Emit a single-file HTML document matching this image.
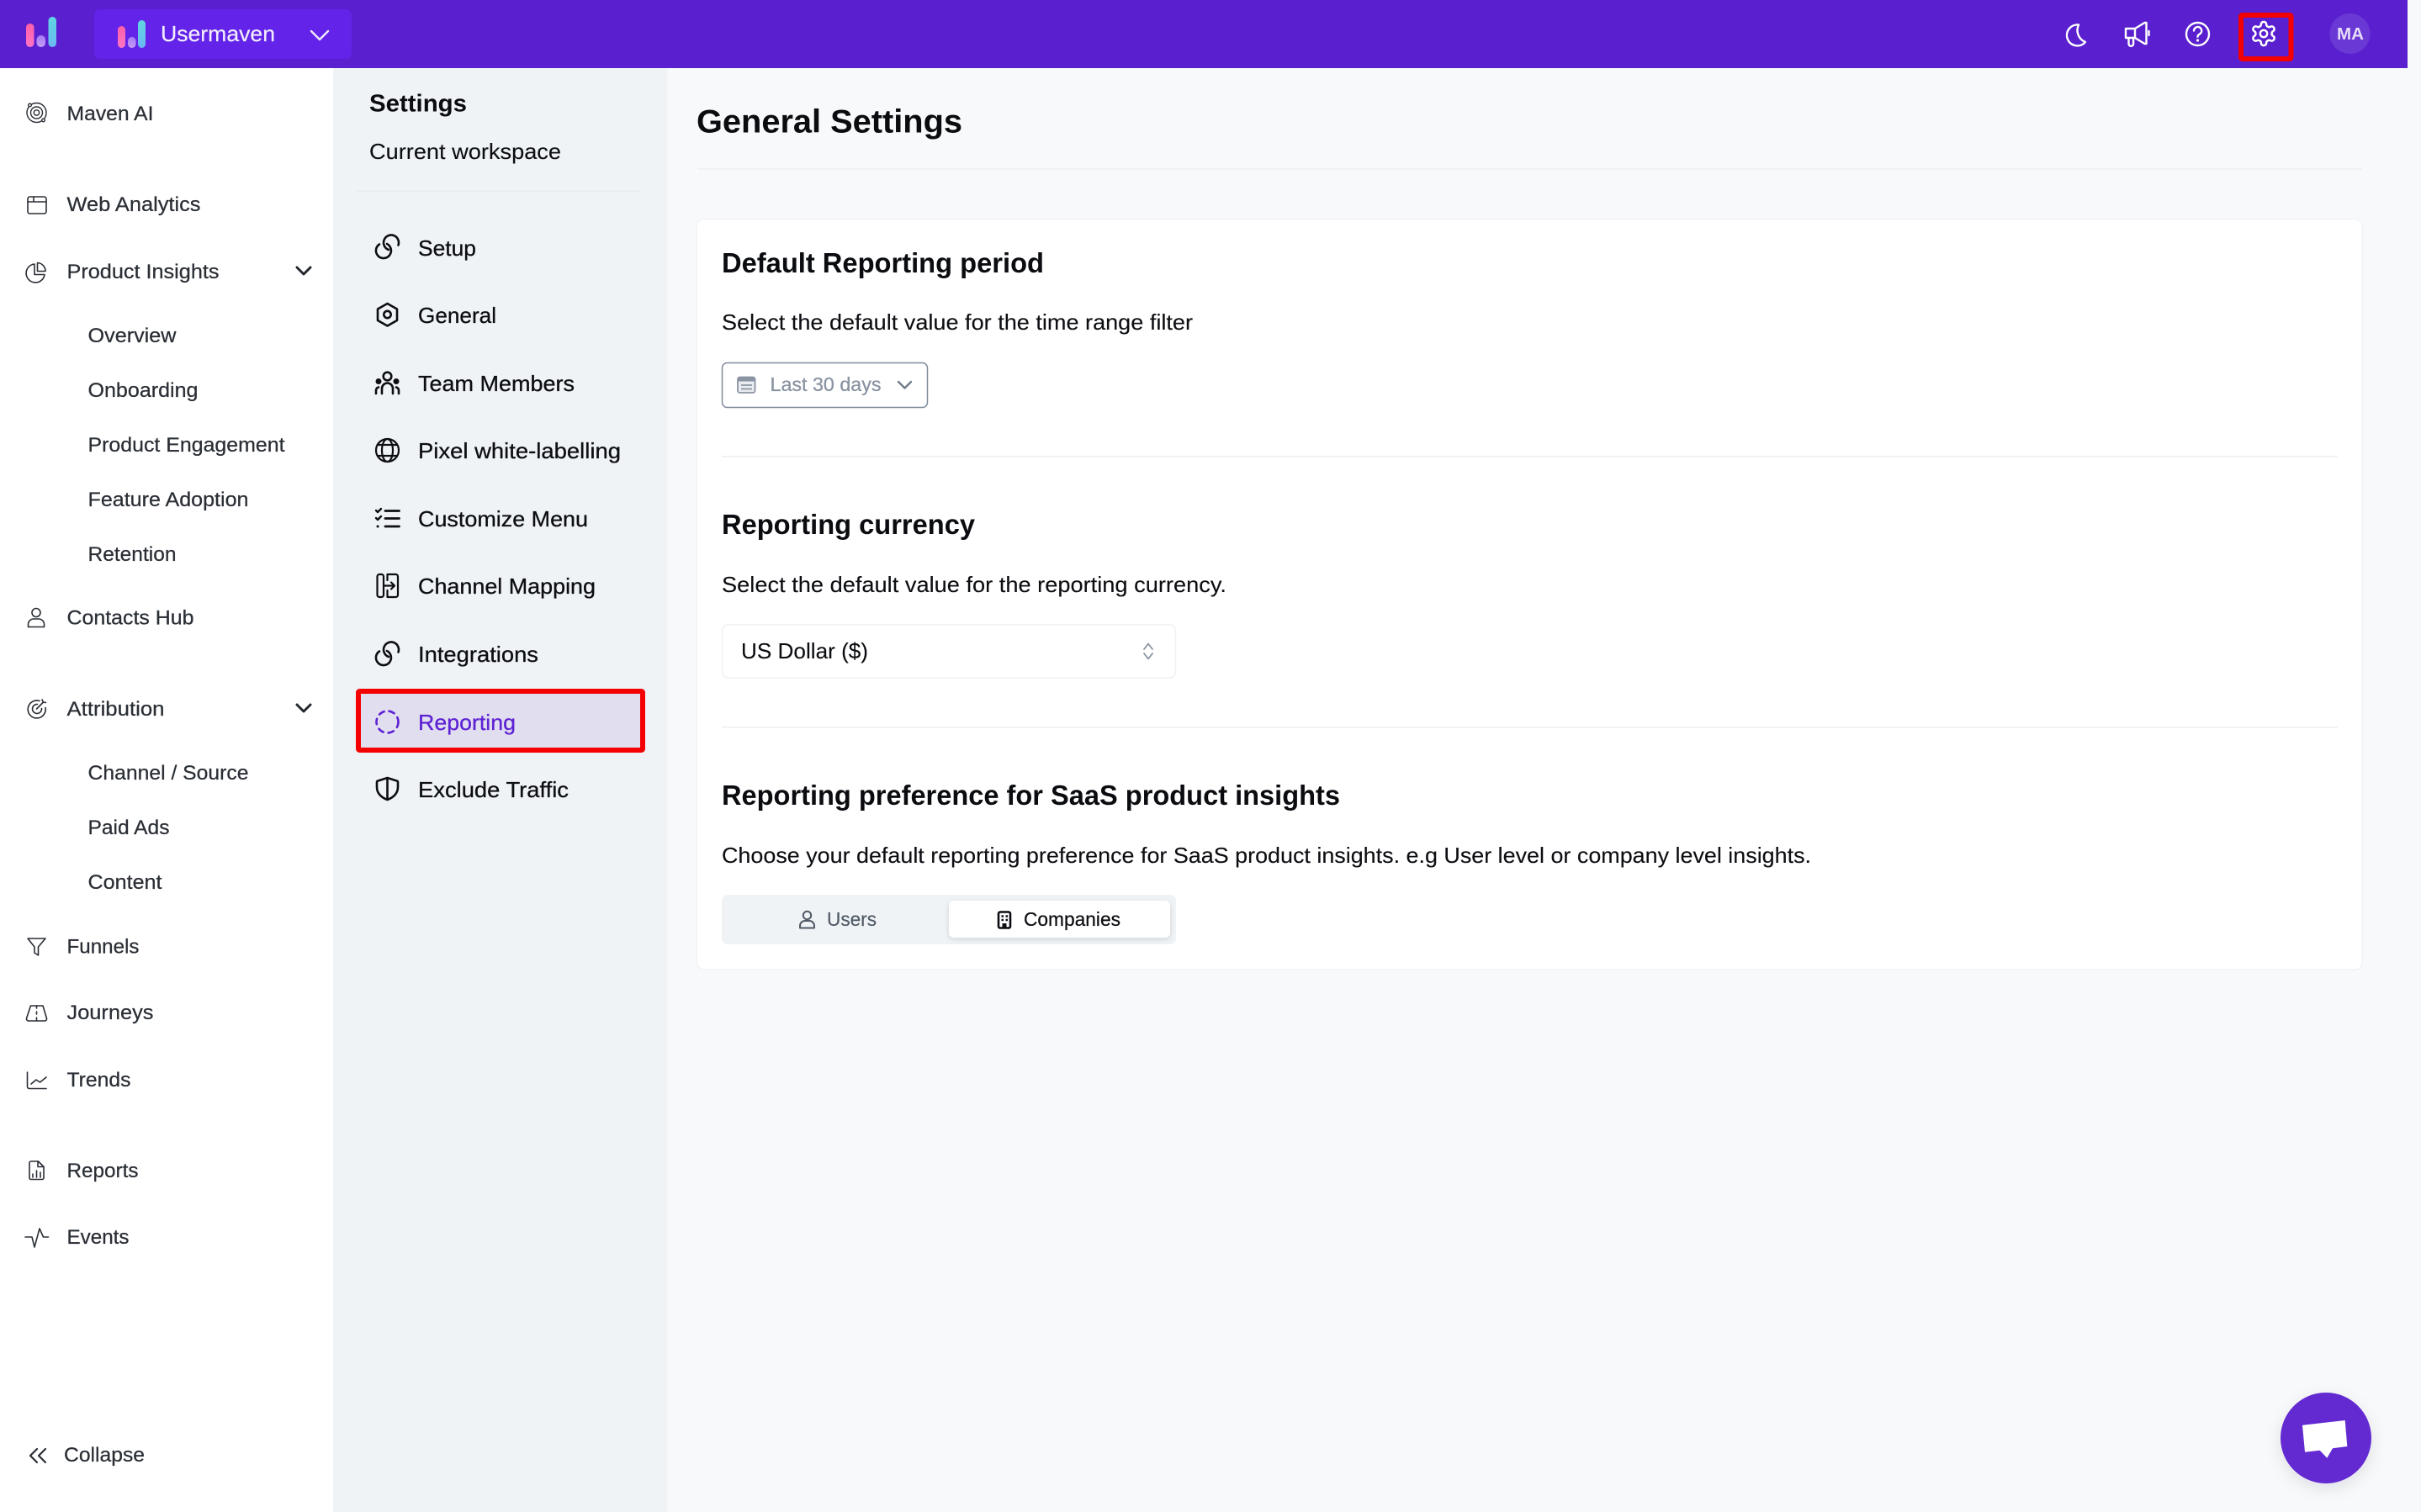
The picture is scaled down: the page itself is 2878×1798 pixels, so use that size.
<!DOCTYPE html>
<html lang="en">
<head>
<meta charset="utf-8">
<title>General Settings</title>
<style>
html,body{margin:0;padding:0;width:2878px;height:1798px;overflow:hidden;background:#f8f9fb}
svg{display:block;position:absolute;left:0;top:0}
text{font-family:"Liberation Sans",sans-serif}
.nav{font-size:24px;fill:#2a2e35;stroke:#2a2e35;stroke-width:.25}
.set{font-size:26px;fill:#0c0e12;stroke:#0c0e12;stroke-width:.3}
.p{font-size:26px;fill:#0c0e12;stroke:#0c0e12;stroke-width:.12}
.h{font-size:33px;font-weight:700;fill:#0a0c10}
.i{fill:none;stroke:#2a2e35;stroke-width:1.6;stroke-linecap:round;stroke-linejoin:round}
.s{fill:none;stroke:#0c0e12;stroke-width:2.6;stroke-linecap:round;stroke-linejoin:round}
.w{fill:none;stroke:#fff;stroke-width:2.4;stroke-linecap:round;stroke-linejoin:round}
</style>
</head>
<body>
<svg width="2878" height="1798" viewBox="0 0 2878 1798" xmlns="http://www.w3.org/2000/svg">
<defs>
<linearGradient id="pk" x1="0" y1="0" x2="0" y2="1"><stop offset="0" stop-color="#ff5fa8"/><stop offset="1" stop-color="#ff74c4"/></linearGradient>
<linearGradient id="pu" x1="0" y1="0" x2="0" y2="1"><stop offset="0" stop-color="#a77bf3"/><stop offset="1" stop-color="#c59bf7"/></linearGradient>
<linearGradient id="bl" x1="0" y1="0" x2="0" y2="1"><stop offset="0" stop-color="#5fd6e0"/><stop offset="1" stop-color="#6bb8f2"/></linearGradient>
<filter id="sh" x="-20%" y="-40%" width="140%" height="200%"><feDropShadow dx="0" dy="2" stdDeviation="3" flood-color="#1a2233" flood-opacity=".14"/></filter>
<filter id="cs" x="-30%" y="-30%" width="160%" height="160%"><feDropShadow dx="0" dy="6" stdDeviation="9" flood-color="#1a2233" flood-opacity=".10"/></filter>
</defs>

<!-- panels -->
<rect width="2878" height="1798" fill="#f8f9fb"/>
<rect x="0" y="81" width="396" height="1717" fill="#fff"/>
<rect x="396" y="81" width="396" height="1717" fill="#f0f3f6"/>
<rect x="792" y="81" width="2" height="1717" fill="#f3f5f8"/>

<!-- top bar -->
<rect x="0" y="0" width="2862" height="81" fill="#5a20cf"/>
<rect x="31" y="28" width="9.5" height="28" rx="4.7" fill="url(#pk)"/>
<rect x="43.5" y="42" width="10.5" height="14" rx="5" fill="url(#pu)"/>
<rect x="57.5" y="20" width="9.5" height="36" rx="4.7" fill="url(#bl)"/>
<rect x="112" y="11" width="306" height="59" rx="7" fill="#6323e8"/>
<rect x="140" y="31" width="9" height="26" rx="4.5" fill="url(#pk)"/>
<rect x="152" y="44" width="9.5" height="13" rx="4.7" fill="url(#pu)"/>
<rect x="164" y="24" width="9" height="33" rx="4.5" fill="url(#bl)"/>
<text x="191" y="49" font-size="26" fill="#f2edfd" stroke="#f2edfd" stroke-width=".2" textLength="136" lengthAdjust="spacingAndGlyphs">Usermaven</text>
<path d="M370 37l10 10 10-10" fill="none" stroke="#efe9fc" stroke-width="2.4" stroke-linecap="round" stroke-linejoin="round"/>

<!-- top right icons -->
<path class="w" d="M2471 29.500a12.500 12.500 0 1 0 8 20.500a15 15 0 0 1-8-20.500z" stroke-width="3.200"/>
<path class="w" d="M2527 34h11l11.500-7h2v25h-2l-11.500-7h-11z" stroke-width="2"/>
<path class="w" d="M2530.500 45v7a2.800 2.800 0 0 0 5.600 0v-7M2538 34v11M2554.500 37v5" stroke-width="2"/>
<circle class="w" cx="2612.500" cy="40.500" r="13.500"/>
<path class="w" d="M2608 36.500a4.600 4.600 0 1 1 6.600 4.200c-1.400.8-2.100 1.500-2.100 3"/>
<circle cx="2612.500" cy="48" r="1.600" fill="#fff"/>
<g transform="translate(2674.200 23.200) scale(1.400)"><path fill="none" stroke="#fff" stroke-width="1.800" stroke-linecap="round" stroke-linejoin="round" d="M12.220 2h-.44a2 2 0 0 0-2 2v.18a2 2 0 0 1-1 1.730l-.43.25a2 2 0 0 1-2 0l-.15-.08a2 2 0 0 0-2.730.73l-.22.38a2 2 0 0 0 .73 2.730l.15.1a2 2 0 0 1 1 1.720v.51a2 2 0 0 1-1 1.740l-.15.09a2 2 0 0 0-.73 2.730l.22.38a2 2 0 0 0 2.730.73l.15-.08a2 2 0 0 1 2 0l.43.25a2 2 0 0 1 1 1.730V20a2 2 0 0 0 2 2h.44a2 2 0 0 0 2-2v-.18a2 2 0 0 1 1-1.730l.43-.25a2 2 0 0 1 2 0l.15.08a2 2 0 0 0 2.730-.73l.22-.39a2 2 0 0 0-.73-2.730l-.15-.08a2 2 0 0 1-1-1.740v-.5a2 2 0 0 1 1-1.740l.15-.09a2 2 0 0 0 .73-2.730l-.22-.38a2 2 0 0 0-2.730-.73l-.15.08a2 2 0 0 1-2 0l-.43-.25a2 2 0 0 1-1-1.730V4a2 2 0 0 0-2-2z"/></g>
<circle class="w" cx="2691" cy="40" r="4.200"/>
<rect x="2664" y="18" width="59.500" height="52" rx="1.500" fill="none" stroke="#f50000" stroke-width="6"/>
<circle cx="2793.500" cy="40" r="24" fill="#6a38d4"/>
<text x="2778" y="47" font-size="20" font-weight="700" fill="#e6ddf8" textLength="32" lengthAdjust="spacingAndGlyphs">MA</text>

<!-- left nav icons -->
<g class="i">
<g stroke-width="1.400"><circle cx="43.500" cy="134" r="11.500"/><circle cx="43.500" cy="134" r="7"/><circle cx="43.500" cy="134" r="3.200"/>
<circle cx="35.500" cy="125" r="1.800" fill="#fff"/><circle cx="51.500" cy="143" r="1.800" fill="#fff"/></g>
<rect x="33" y="234" width="22" height="20" rx="2.500"/><path d="M33 240h22M40 234v6"/>
<path d="M41 314a11 11 0 1 0 12 12.500H41z"/><path d="M44.500 312.500a10 10 0 0 1 9.500 10h-9.500z"/>
<circle cx="43" cy="728.500" r="5"/><path d="M33.500 745.500v-3a6.500 6.500 0 0 1 6.500-6.500h6a6.500 6.500 0 0 1 6.500 6.500v3z"/>
<path d="M47 833.500a10.500 10.500 0 1 0 7 8"/><path d="M44.500 837.500a5.500 5.500 0 1 0 5 5"/><path d="M43.500 843l8-8M50 832l1.500 3 3 .5"/>
<path d="M33 1116h21l-8.500 10v10l-4.500-3v-7z"/>
<path d="M36.500 1196h14.500l4.500 15a2.500 2.500 0 0 1-2.500 3h-19a2.500 2.500 0 0 1-2.500-3z"/><path d="M43.500 1196v3M43.500 1203v3M43.500 1210v3"/>
<path d="M32.500 1275v17a2.500 2.500 0 0 0 2.500 2.500h20"/><path d="M37 1289l6-5 4.500 3 7.500-6"/>
<path d="M37 1381h8.500l6.500 6.500v13a2 2 0 0 1-2 2h-13a2 2 0 0 1-2-2v-17.500a2 2 0 0 1 2-2z"/><path d="M45 1381v6.500h7M39 1400v-4M43.500 1400v-8M48 1400v-6"/>
<path d="M30 1471h8l3 12 6-22 4.500 10h6"/>
<path d="M44 1723l-8 8 8 8M54 1723l-8 8 8 8" stroke-width="2.200"/>
</g>
<path d="M353 318l8 8 8-8M353 838l8 8 8-8" fill="none" stroke="#23272e" stroke-width="3" stroke-linecap="round" stroke-linejoin="round"/>

<!-- left nav text -->
<g class="nav">
<text x="79.500" y="143" textLength="103" lengthAdjust="spacingAndGlyphs">Maven AI</text>
<text x="79.500" y="251" textLength="159" lengthAdjust="spacingAndGlyphs">Web Analytics</text>
<text x="79.500" y="331" textLength="181" lengthAdjust="spacingAndGlyphs">Product Insights</text>
<text x="104.500" y="407" textLength="105" lengthAdjust="spacingAndGlyphs">Overview</text>
<text x="104.500" y="472" textLength="131" lengthAdjust="spacingAndGlyphs">Onboarding</text>
<text x="104.500" y="537" textLength="234" lengthAdjust="spacingAndGlyphs">Product Engagement</text>
<text x="104.500" y="602" textLength="191" lengthAdjust="spacingAndGlyphs">Feature Adoption</text>
<text x="104.500" y="667" textLength="105" lengthAdjust="spacingAndGlyphs">Retention</text>
<text x="79.500" y="742.500" textLength="151" lengthAdjust="spacingAndGlyphs">Contacts Hub</text>
<text x="79.500" y="851" textLength="116" lengthAdjust="spacingAndGlyphs">Attribution</text>
<text x="104.500" y="927" textLength="191" lengthAdjust="spacingAndGlyphs">Channel / Source</text>
<text x="104.500" y="992" textLength="97" lengthAdjust="spacingAndGlyphs">Paid Ads</text>
<text x="104.500" y="1057" textLength="88" lengthAdjust="spacingAndGlyphs">Content</text>
<text x="79.500" y="1133.500" textLength="86" lengthAdjust="spacingAndGlyphs">Funnels</text>
<text x="79.500" y="1212" textLength="103" lengthAdjust="spacingAndGlyphs">Journeys</text>
<text x="79.500" y="1292" textLength="76" lengthAdjust="spacingAndGlyphs">Trends</text>
<text x="79.500" y="1400" textLength="85" lengthAdjust="spacingAndGlyphs">Reports</text>
<text x="79.500" y="1479" textLength="74" lengthAdjust="spacingAndGlyphs">Events</text>
<text x="76" y="1738" textLength="96" lengthAdjust="spacingAndGlyphs">Collapse</text>
</g>

<!-- settings panel -->
<text x="439" y="132.500" font-size="29" font-weight="700" fill="#0a0c10" textLength="116" lengthAdjust="spacingAndGlyphs">Settings</text>
<text x="439" y="189" class="p" textLength="228" lengthAdjust="spacingAndGlyphs">Current workspace</text>
<rect x="425" y="226.500" width="337" height="1.500" fill="#e6e9ee"/>

<rect x="426" y="822" width="338" height="70" rx="1.500" fill="#e1deef" stroke="#f50000" stroke-width="6"/>

<g class="set">
<text x="497" y="304" textLength="69" lengthAdjust="spacingAndGlyphs">Setup</text>
<text x="497" y="384" textLength="93" lengthAdjust="spacingAndGlyphs">General</text>
<text x="497" y="465" textLength="186" lengthAdjust="spacingAndGlyphs">Team Members</text>
<text x="497" y="545" textLength="241" lengthAdjust="spacingAndGlyphs">Pixel white-labelling</text>
<text x="497" y="626" textLength="202" lengthAdjust="spacingAndGlyphs">Customize Menu</text>
<text x="497" y="706" textLength="211" lengthAdjust="spacingAndGlyphs">Channel Mapping</text>
<text x="497" y="787" textLength="143" lengthAdjust="spacingAndGlyphs">Integrations</text>
<text x="497" y="948" textLength="179" lengthAdjust="spacingAndGlyphs">Exclude Traffic</text>
</g>
<text x="497" y="868" font-size="26" fill="#5e22d4" stroke="#5e22d4" stroke-width=".3" textLength="116" lengthAdjust="spacingAndGlyphs">Reporting</text>

<!-- settings icons -->
<g class="s">
<path d="M473.500 291.500A9 9 0 1 0 462 297"/>
<path d="M451 290.500A9 9 0 1 0 460 290"/>
<path d="M473.500 775.500A9 9 0 1 0 462 781"/>
<path d="M451 774.500A9 9 0 1 0 460 774"/>
<path d="M460.500 361l11.500 6.500v13.500l-11.500 6.500-11.500-6.500v-13.500z"/><circle cx="460.500" cy="374" r="4.200"/>
<circle cx="460.500" cy="447.500" r="4.800"/><circle cx="450" cy="453.500" r="2.200" fill="#0c0e12"/><circle cx="471" cy="453.500" r="2.200" fill="#0c0e12"/>
<path d="M454 468v-6a6.500 6.500 0 0 1 13 0v6"/><path d="M447 468v-4a4 4 0 0 1 3-3.500M474 468v-4a4 4 0 0 0-3-3.500"/>
<g stroke-width="2.200"><circle cx="460.500" cy="535.500" r="13.500"/><path d="M449 529h23M449 542h23"/><ellipse cx="460.500" cy="535.500" rx="6.500" ry="13.500"/></g>
<path d="M458 607.500h16.500M458 616.500h16.500M458 626h16.500" stroke-width="2.800"/>
<path d="M447 607l2 2 4-4M447 616l2 2 4-4" stroke-width="2.400"/><path d="M449 626h.1" stroke-width="3"/>
<g stroke-width="2.200"><rect x="448.500" y="683" width="7.500" height="27" rx="2.500"/>
<path d="M460.500 683h10a2.500 2.500 0 0 1 2.500 2.500v22a2.500 2.500 0 0 1-2.500 2.500h-10v-8M460.500 683v7"/>
<path d="M457 696.500h12M465 692.500l4 4-4 4"/></g>
<path d="M460.500 925l11 3.500c1 0 1.500.7 1.500 1.700v5.800c0 7.500-5.500 12.500-12.500 15-7-2.500-12.500-7.500-12.500-15v-5.800c0-1 .5-1.700 1.500-1.700zM460.500 925v26"/>
</g>
<circle cx="460.500" cy="858.500" r="13" fill="none" stroke="#5e22d4" stroke-width="2.600" stroke-linecap="round" stroke-dasharray="6.500 6.100"/>

<!-- main -->
<text x="828" y="157.500" font-size="39" font-weight="700" fill="#0a0c10" textLength="316" lengthAdjust="spacingAndGlyphs">General Settings</text>
<rect x="829" y="200" width="1979" height="1.500" fill="#eef0f3"/>

<rect x="828" y="260.500" width="1980.500" height="892.500" rx="9" fill="#fff" stroke="#f0f2f5" stroke-width="1.500"/>

<text x="858" y="324" class="h" textLength="383" lengthAdjust="spacingAndGlyphs">Default Reporting period</text>
<text x="858" y="392" class="p" textLength="560" lengthAdjust="spacingAndGlyphs">Select the default value for the time range filter</text>

<rect x="858.500" y="431.500" width="244" height="53" rx="6" fill="#fff" stroke="#7f8a9a" stroke-width="1.500"/>
<rect x="877" y="448.500" width="20.500" height="18.500" rx="2.500" fill="#e9ecf0" stroke="#8a94a2" stroke-width="1.800"/>
<rect x="877" y="448.500" width="20.500" height="5" fill="#8a94a2"/>
<path d="M881 458h13M881 462.500h13" stroke="#8a94a2" stroke-width="1.800"/>
<text x="915.500" y="465" font-size="23" fill="#8a94a2" stroke="#8a94a2" stroke-width=".3" textLength="132" lengthAdjust="spacingAndGlyphs">Last 30 days</text>
<path d="M1068 454l7.500 7.500 7.500-7.500" fill="none" stroke="#717c8b" stroke-width="2.400" stroke-linecap="round" stroke-linejoin="round"/>

<rect x="858" y="542" width="1921" height="1.500" fill="#eceef1"/>

<text x="858" y="635" class="h" textLength="301" lengthAdjust="spacingAndGlyphs">Reporting currency</text>
<text x="858" y="704" class="p" textLength="600" lengthAdjust="spacingAndGlyphs">Select the default value for the reporting currency.</text>

<rect x="858.500" y="743" width="539" height="63" rx="7" fill="#fff" stroke="#eff1f4" stroke-width="1.500"/>
<text x="881" y="783" class="p" textLength="151" lengthAdjust="spacingAndGlyphs">US Dollar ($)</text>
<path d="M1360 772l5-6.500 5 6.500M1360 777l5 6.500 5-6.500" fill="none" stroke="#8a94a2" stroke-width="1.800" stroke-linecap="round" stroke-linejoin="round"/>

<rect x="858" y="864" width="1921" height="1.500" fill="#eceef1"/>

<text x="858" y="957" class="h" textLength="735" lengthAdjust="spacingAndGlyphs">Reporting preference for SaaS product insights</text>
<text x="858" y="1026" class="p" textLength="1295" lengthAdjust="spacingAndGlyphs">Choose your default reporting preference for SaaS product insights. e.g User level or company level insights.</text>

<rect x="858" y="1064" width="540" height="59" rx="7" fill="#f0f3f6"/>
<rect x="1128" y="1071" width="263" height="44" rx="6" fill="#fff" filter="url(#sh)"/>
<g fill="none" stroke="#4f5965" stroke-width="2">
<circle cx="959.500" cy="1088.500" r="4.700"/>
<path d="M951 1103.500v-2.500a6 6 0 0 1 6-6h5a6 6 0 0 1 6 6v2.500z" stroke-linejoin="round"/>
</g>
<text x="983" y="1101" font-size="23" fill="#4f5965" stroke="#4f5965" stroke-width=".15" textLength="59" lengthAdjust="spacingAndGlyphs">Users</text>
<rect x="1187" y="1084.500" width="14" height="19" rx="2" fill="none" stroke="#0c0e12" stroke-width="2.600"/>
<path d="M1190.500 1089.500h2.500M1195.500 1089.500h2.500M1190.500 1094h2.500M1195.500 1094h2.500" stroke="#0c0e12" stroke-width="2.600"/>
<rect x="1191.500" y="1098" width="5" height="6" fill="#0c0e12"/>
<text x="1217" y="1101" font-size="23" fill="#0c0e12" stroke="#0c0e12" stroke-width=".25" textLength="115" lengthAdjust="spacingAndGlyphs">Companies</text>

<!-- chat bubble -->
<circle cx="2765" cy="1710" r="54" fill="#632bd1" filter="url(#cs)"/>
<polygon points="2737,1694.700 2787.700,1689 2790.300,1720 2773,1722.300 2766.300,1733.700 2757.700,1724.700 2740,1726.700" fill="#fff"/>
</svg>
</body>
</html>
